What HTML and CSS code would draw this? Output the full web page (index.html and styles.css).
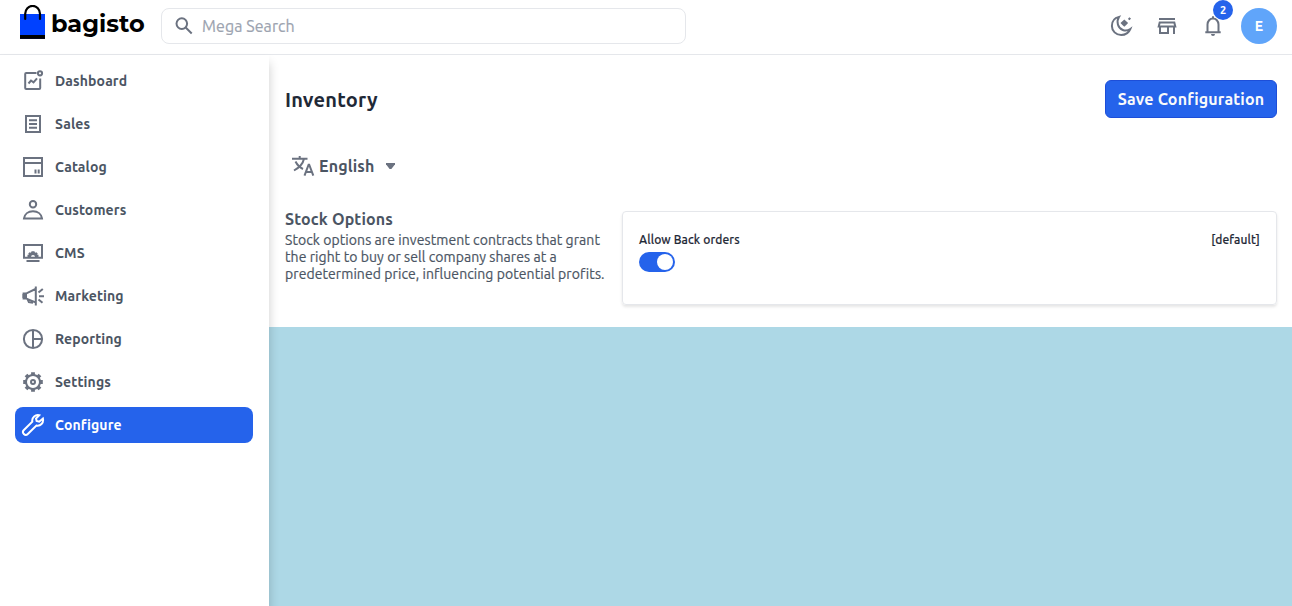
FILE: index.html
```html
<!DOCTYPE html>
<html lang="en">
<head>
<meta charset="utf-8">
<title>Inventory</title>
<link rel="stylesheet" href="styles.css">
</head>
<body>
<header class="header">
  <a class="logo">
    <svg width="26" height="36" viewBox="0 0 26 36"><path fill="#0041ff" d="M0 9h25v22H0z"/><path fill="#060c3b" d="M0 30h25v4H0z"/><path d="M0 30h25v3.500H0z"/><path d="M5.200 14V8.800a7.300 7.800 0 0 1 14.800 0V14" fill="none" stroke="#000" stroke-width="2.200" stroke-linecap="round"/></svg>
    <span class="logo-name">bagisto</span>
  </a>
  <div class="search">
    <svg width="18" height="18" viewBox="0 0 18 18" class="icon"><circle cx="6.800" cy="6.600" r="5.300"/><path d="m10.700 10.500 6 6"/></svg>
    <span>Mega Search</span>
  </div>
  <div class="tools">
    <svg width="24" height="24" viewBox="0 0 24 24" class="icon"><path d="M10 2.900C5.500 4 2.900 7.300 2.900 11.900c0 5.200 4.100 9.100 9.200 9.100 4.300 0 7.700-2.300 9.200-6-2.300 1.600-5 2-7.500 1C8.800 14.200 7 7.600 10 2.900Z"/><path class="solid" d="m15.300 5.400 1.900 1.800 1.900 1.900-1.900 1.800-1.900 1.900-1.900-1.900-1.900-1.800 1.900-1.900zM20.300 3.200l1.700 1.400-1.400 1.700-1.700-1.400z"/></svg>
    <svg width="24" height="24" viewBox="0 0 24 24" class="icon"><path d="M4 4.900h16M4.700 8.400h14.600l1 4.200H3.700zM5 12.500V19h8v-6.500M19 12.500V20"/></svg>
    <div class="bell">
      <svg width="24" height="24" viewBox="0 0 24 24" class="icon"><path d="M4.300 18.200h15.400M6.500 18v-7.500a5.500 6 0 0 1 11 0V18M12 2.300v2"/><path class="solid" d="M10 20h4a2 2 0 0 1-4 0Z"/></svg>
      <span class="badge">2</span>
    </div>
    <span class="avatar">E</span>
  </div>
</header>
<div class="shell">
  <nav class="sidebar">
    <a class="item"><svg width="24" height="24" viewBox="0 0 24 24" class="icon"><path d="M15.500 4H5.200a1 1 0 0 0-1 1v14a1 1 0 0 0 1 1h13a1 1 0 0 0 1-1V9.500M7.500 14.500l2.500-3 2.500 1.800 3.500-4"/><circle cx="19" cy="4.300" r="2.100"/></svg><span>Dashboard</span></a>
    <a class="item"><svg width="24" height="24" viewBox="0 0 24 24" class="icon"><path d="M5 4h14v16H5zM8 8.300h8M8 12h8M8 15.700h8"/></svg><span>Sales</span></a>
    <a class="item"><svg width="24" height="24" viewBox="0 0 24 24" class="icon"><path d="M3 3h18v18H3zM3 8h18M14.500 14.500v4M17.700 14.500v4"/></svg><span>Catalog</span></a>
    <a class="item"><svg width="24" height="24" viewBox="0 0 24 24" class="icon"><circle cx="12" cy="6.200" r="3.200"/><path d="M3 20.500c.6-4.500 4.200-7.200 9-7.200s8.400 2.700 9 7.200z"/></svg><span>Customers</span></a>
    <a class="item"><svg width="24" height="24" viewBox="0 0 24 24" class="icon"><path d="M3 4h18v12.800H3zM5.500 20h13"/><path class="solid" d="M6.500 16v-2.300h1.300l-.5-1.200 1.300-1.300 1.300.6.700-1.500h2.800l.7 1.500 1.300-.6 1.300 1.300-.5 1.200h1.300V16H14a2 2 0 0 0-4 0z"/></svg><span>CMS</span></a>
    <a class="item"><svg width="24" height="24" viewBox="0 0 24 24" class="icon"><path d="M14.800 2.500v19M14.500 5 5 9.600H2.600v4.800H5l9.500 4M6.500 15l1.400 3.200 3.200.5.500-1.500M17.500 8.500l4.300-3.600M18 12.200h5M17.500 15.500l4 3.300"/><path class="solid" d="M1.500 10 6 9v6l-4.500-1z"/></svg><span>Marketing</span></a>
    <a class="item"><svg width="24" height="24" viewBox="0 0 24 24" class="icon"><circle cx="12" cy="12" r="9.100"/><path d="M12 3v18M12 12h9"/></svg><span>Reporting</span></a>
    <a class="item"><svg width="24" height="24" viewBox="0 0 24 24" class="icon"><circle cx="12" cy="12" r="7"/><path stroke-width="3.800" d="M12 2.200v3.300M12 18.500v3.300M2.200 12h3.300M18.500 12h3.300M5 5l2 2M17 17l2 2M5 19l2-2M17 7l2-2"/><circle cx="12" cy="12" r="2"/></svg><span>Settings</span></a>
    <a class="item active"><svg width="24" height="24" viewBox="0 0 24 24" class="icon"><path d="M18.200 2.300c-3.600-1-7.600 2-6.900 6.400L2.900 17a2.600 2.600 0 0 0 3.900 4l8.600-8.400c4 .8 7.500-2.700 6.500-7l-3.700 3.100-2.600-.7-.6-2.400z"/></svg><span>Configure</span></a>
  </nav>
  <main class="main">
    <div class="content">
      <div class="heading">
        <h1>Inventory</h1>
        <button class="save">Save Configuration</button>
      </div>
      <div class="locale">
        <svg width="24" height="24" viewBox="0 0 24 24" class="icon"><path d="M1 4.700h15.500M8.700 2v2.700M13 4.700C12 9.500 8 13.700 3 16.500M4.500 7.500c1.800 3.500 4.200 6 7.500 7.500M13.500 21.700l4.100-11h.6l4.100 11M14.900 18h6"/></svg>
        <span class="language">English</span>
        <i class="caret"></i>
      </div>
      <section class="option">
        <div class="about">
          <h2>Stock Options</h2>
          <p>Stock options are investment contracts that grant the right to buy or sell company shares at a predetermined price, influencing potential profits.</p>
        </div>
        <div class="card">
          <div class="card-row"><label>Allow Back orders</label><span>[default]</span></div>
          <div class="toggle"><span></span></div>
        </div>
      </section>
    </div>
  </main>
</div>
</body>
</html>
```
FILE: styles.css
```css
* { box-sizing: border-box; }
body { margin: 0; height: 606px; overflow: hidden; display: flex; flex-direction: column; background: #fff; color: #4b5563; font-family: Ubuntu, "Noto Sans", sans-serif; }
h1, h2, p { margin: 0; }
span, h1, h2, button, label { white-space: nowrap; }
svg { display: block; flex: none; }
.icon { fill: none; stroke: #6b7280; stroke-width: 2; }
.icon .solid { fill: #6b7280; stroke: none; }
.header { height: 55px; flex: none; display: flex; align-items: flex-start; padding: 0 15px 0 20px; border-bottom: 1px solid #e5e7eb; }
.logo { display: flex; width: 141px; padding-top: 5px; color: #000; }
.logo-name { margin-left: 5px; font: 700 24px/37px Montserrat, Inter, sans-serif; }
.search { width: 525px; height: 36px; margin-top: 8px; border: 1px solid #e5e7eb; border-radius: 8px; display: flex; align-items: center; padding-left: 13px; gap: 9px; color: #9ca3af; font-size: 16px; letter-spacing: .08px; -webkit-text-stroke: .2px; }
.tools { margin-left: auto; display: flex; align-items: center; gap: 22px; padding-top: 8px; }
.bell { position: relative; }
.badge { position: absolute; left: 12px; top: -14px; width: 20px; height: 20px; border-radius: 50%; background: #2563eb; color: #fff; font-size: 11px; font-weight: 700; line-height: 20px; text-align: center; }
.avatar { width: 36px; height: 36px; margin-left: -6px; border-radius: 50%; background: #60a5fa; color: #fff; font-size: 14px; font-weight: 700; line-height: 36px; text-align: center; }
.shell { flex: 1; display: flex; min-height: 0; }
.sidebar { position: relative; width: 269px; flex: none; padding: 8px 16px 0 15px; display: flex; flex-direction: column; gap: 7px; background: #fff; box-shadow: 0 8px 10px rgba(0,0,0,.2); }
.item { height: 36px; display: flex; align-items: center; gap: 10px; padding-left: 6px; border-radius: 8px; font-size: 14px; font-weight: 700; letter-spacing: .12px; }
.active { background: #2563eb; color: #fff; }
.active .icon { stroke: #fff; }
.main { flex: 1; background: #add8e6; }
.content { height: 272px; padding: 25px 15px 0 16px; background: #fff; }
.heading { display: flex; justify-content: space-between; align-items: center; height: 38px; }
h1 { padding-top: 2px; color: #1f2937; font-size: 20px; font-weight: 700; line-height: 30px; letter-spacing: .2px; }
.save { width: 172px; height: 38px; padding: 0; border: 1px solid #1d4ed8; border-radius: 6px; background: #2563eb; color: #f9fafb; font: 700 16px/24px Ubuntu, "Noto Sans", sans-serif; letter-spacing: .15px; }
.locale { display: flex; align-items: center; height: 36px; margin-top: 30px; padding-left: 6px; }
.language { width: 55px; margin-left: 4px; font-size: 16px; font-weight: 700; letter-spacing: .15px; }
.caret { width: 9px; height: 6px; margin-left: 12px; background: #6b7280; clip-path: polygon(0 0, 100% 0, 100% 20%, 60% 100%, 40% 100%, 0 20%); }
.option { display: flex; margin-top: 27px; }
.about { width: 337px; padding-right: 16px; flex: none; }
h2 { font-size: 16px; font-weight: 700; line-height: 17px; letter-spacing: .15px; }
p { margin-top: 4px; font-size: 14px; line-height: 17px; letter-spacing: .075px; -webkit-text-stroke: .2px; }
.card { flex: 1; height: 94px; padding: 19px 16px; border: 1px solid #e5e7eb; border-radius: 4px; box-shadow: 0 2px 3px rgba(0,0,0,.1); }
.card-row { display: flex; justify-content: space-between; color: #1f2937; font-size: 12px; font-weight: 500; line-height: 18px; letter-spacing: .12px; -webkit-text-stroke: .15px; }
.toggle { width: 36px; height: 20px; margin-top: 3px; padding: 2px; border-radius: 10px; background: #2563eb; display: flex; justify-content: flex-end; }
.toggle span { width: 16px; height: 16px; border-radius: 50%; background: #fff; }
```
